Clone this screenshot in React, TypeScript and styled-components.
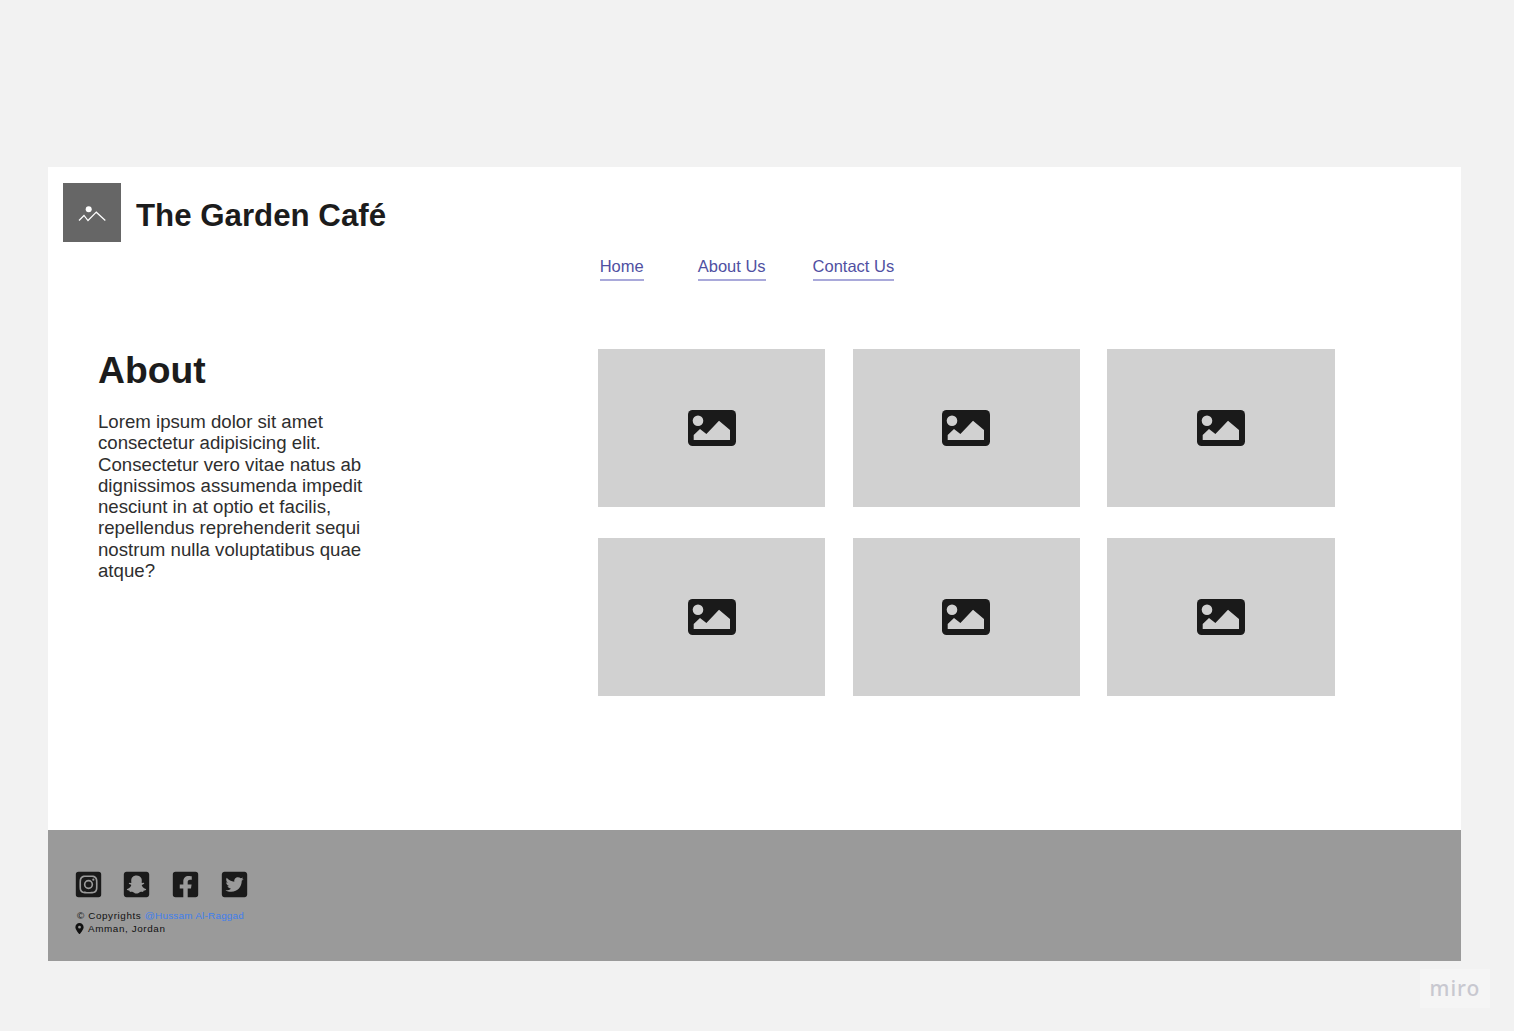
import React from "react";
import styled, { createGlobalStyle } from "styled-components";
import {
  FaFacebookSquare,
  FaInstagramSquare,
  FaSnapchatSquare,
  FaTwitterSquare,
} from "react-icons/fa";
import { FaLocationDot } from "react-icons/fa6";

const GlobalStyle = createGlobalStyle`
  html, body {
    margin: 0;
    padding: 0;
    background: #f2f2f2;
    font-family: "Liberation Sans", Arial, sans-serif;
  }
`;

const Page = styled.div`
  position: relative;
  box-sizing: border-box;
  height: 1031px;
  padding: 167px 53px 0 48px;
  overflow: hidden;
`;

const Board = styled.div`
  display: flex;
  flex-direction: column;
  height: 794px;
  background: #fff;
`;

const Header = styled.header`
  display: flex;
  align-items: center;
  gap: 15px;
  height: 59px;
  padding: 16px 0 0 15px;
`;

const LogoBox = styled.div`
  display: flex;
  align-items: center;
  justify-content: center;
  width: 58px;
  height: 59px;
  background: #666;
`;

const Title = styled.h1`
  margin: 6px 0 0;
  font-size: 31.25px;
  font-weight: 700;
  line-height: 36px;
  color: #1c1c1c;
`;

const Nav = styled.nav`
  display: flex;
  height: 26px;
  margin-top: 13px;
  padding-left: 551.7px;
`;

const NavLink = styled.a<{ $gap: number }>`
  box-sizing: border-box;
  height: 26px;
  margin-right: ${(p) => p.$gap}px;
  padding-top: 2px;
  border-bottom: 2px solid #a9a9da;
  font-size: 16.5px;
  line-height: 19px;
  color: #5050a2;
`;

const Main = styled.main`
  display: flex;
  flex: 1;
  padding: 68px 0 0 50px;
`;

const AboutColumn = styled.section`
  width: 500px;
`;

const Heading = styled.h2`
  margin: 0 0 19px;
  font-size: 37.3px;
  font-weight: 700;
  line-height: 43px;
  color: #1c1c1c;
`;

const Body = styled.p`
  width: 272px;
  margin: 0;
  font-size: 18.65px;
  line-height: 21.3px;
  color: #2e2e2e;
`;

const Gallery = styled.div`
  display: grid;
  grid-template-columns: repeat(3, 227.3px);
  grid-auto-rows: 158px;
  column-gap: 27.4px;
  row-gap: 31px;
`;

const Tile = styled.div`
  display: flex;
  align-items: center;
  justify-content: center;
  background: #d1d1d1;
`;

const Footer = styled.footer`
  display: flex;
  flex-direction: column;
  height: 131px;
  box-sizing: border-box;
  padding: 40px 0 0 25.3px;
  background: #9a9a9a;
`;

const Socials = styled.div`
  display: flex;
  gap: 18.6px;
  color: #1a1a1a;
`;

const SocialSlot = styled.span`
  display: flex;
  align-items: center;
  justify-content: center;
  width: 30px;
  height: 28px;
  font-size: 29px;
`;

const FooterText = styled.div`
  margin-top: 11px;
  font-size: 9.9px;
  line-height: 13px;
  letter-spacing: 0.6px;
  color: #111;
`;

const FooterRow = styled.div<{ $indent: number }>`
  display: flex;
  align-items: center;
  gap: 3px;
  padding-left: ${(p) => p.$indent}px;
  white-space: pre;
`;

const Author = styled.span`
  letter-spacing: 0.25px;
  color: #3f7fee;
`;

const Watermark = styled.div`
  position: absolute;
  left: 1420px;
  top: 969px;
  box-sizing: border-box;
  display: flex;
  align-items: center;
  justify-content: center;
  width: 70px;
  height: 39px;
  padding-bottom: 1px;
  background: #f5f5f5;
  font-family: "Noto Sans", sans-serif;
  font-size: 21px;
  font-weight: 500;
  letter-spacing: 1px;
  color: #c8c8d0;
`;

const LogoIcon = () => (
  <svg width="28" height="20" viewBox="0 0 28 20" fill="none">
    <circle cx="10.7" cy="6.2" r="3" fill="#fff" />
    <path d="M1 17.5 L6 12.5 L10 17.5 L18.3 9.2 L27.3 17.5" stroke="#fff" strokeWidth="1.2" />
  </svg>
);

const PictureIcon = () => (
  <svg width="48" height="36" viewBox="0 0 48 36">
    <rect width="48" height="36" rx="4.5" fill="#1a1a1a" />
    <circle cx="10" cy="10.7" r="5.3" fill="#d1d1d1" />
    <path d="M5.7 30 V25 L12 19 L18.4 24 L31 10.7 L42 20 V30 Z" fill="#d1d1d1" />
  </svg>
);

const tiles = [1, 2, 3, 4, 5, 6];

const App: React.FunctionComponent = () => {
  return (
    <Page>
      <GlobalStyle />
      <Board>
        <Header>
          <LogoBox>
            <LogoIcon />
          </LogoBox>
          <Title>The Garden Café</Title>
        </Header>
        <Nav>
          <NavLink $gap={54}>Home</NavLink>
          <NavLink $gap={47}>About Us</NavLink>
          <NavLink $gap={0}>Contact Us</NavLink>
        </Nav>
        <Main>
          <AboutColumn>
            <Heading>About</Heading>
            <Body>
              Lorem ipsum dolor sit amet consectetur adipisicing elit.
              Consectetur vero vitae natus ab dignissimos assumenda impedit
              nesciunt in at optio et facilis, repellendus reprehenderit sequi
              nostrum nulla voluptatibus quae atque?
            </Body>
          </AboutColumn>
          <Gallery>
            {tiles.map((t) => (
              <Tile key={t}>
                <PictureIcon />
              </Tile>
            ))}
          </Gallery>
        </Main>
        <Footer>
          <Socials>
            <SocialSlot>
              <FaInstagramSquare />
            </SocialSlot>
            <SocialSlot>
              <FaSnapchatSquare />
            </SocialSlot>
            <SocialSlot>
              <FaFacebookSquare />
            </SocialSlot>
            <SocialSlot>
              <FaTwitterSquare />
            </SocialSlot>
          </Socials>
          <FooterText>
            <FooterRow $indent={3.7}>
              <span>
                © Copyrights <Author>@Hussam Al-Raggad</Author>
              </span>
            </FooterRow>
            <FooterRow $indent={0.7}>
              <FaLocationDot size={11} />
              <span>Amman, Jordan</span>
            </FooterRow>
          </FooterText>
        </Footer>
      </Board>
      <Watermark>miro</Watermark>
    </Page>
  );
};

export default App;
